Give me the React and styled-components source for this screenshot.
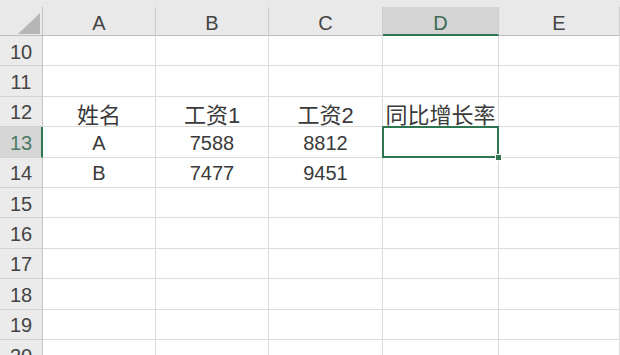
import React from 'react'
import styled, { createGlobalStyle, css } from 'styled-components'

const GlobalStyle = createGlobalStyle`
  html, body {
    margin: 0;
    padding: 0;
    background: #ffffff;
    overflow: hidden;
  }
`

const GREEN = '#2f7550'

const Sheet = styled.div`
  width: 620px;
  height: 355px;
  overflow: hidden;
  background: #e9e9e9;
  padding-top: 7px;
  box-sizing: border-box;
  font-family: 'Liberation Sans', 'Noto Sans CJK SC', sans-serif;
`

const Grid = styled.div`
  display: grid;
  grid-template-columns: 43px 113px 113px 114px 116px 1fr;
  grid-template-rows: 29px;
  grid-auto-rows: 30.4px;
  background: #ffffff;
`

const Corner = styled.div`
  background: #e9e9e9;
  border-right: 1px solid #c4c4c4;
  border-bottom: 1px solid #bdbdbd;
  display: flex;
  align-items: flex-end;
  justify-content: flex-end;
  padding: 0 2px 1px 0;
  box-sizing: border-box;
`

const ColHead = styled.div`
  background: ${p => (p.$active ? '#d4d4d4' : '#e9e9e9')};
  color: ${p => (p.$active ? '#3f6b55' : '#444444')};
  border-right: 1px solid #cdcdcd;
  border-bottom: ${p => (p.$active ? `2px solid ${GREEN}` : '1px solid #bdbdbd')};
  display: flex;
  align-items: center;
  justify-content: center;
  font-size: 20px;
  box-sizing: border-box;
  padding-top: ${p => (p.$active ? '5px' : '4px')};
`

const RowHead = styled.div`
  background: ${p => (p.$active ? '#d6d6d6' : '#ebebeb')};
  color: ${p => (p.$active ? '#4c7a62' : '#444444')};
  border-right: ${p => (p.$active ? `2px solid ${GREEN}` : '1px solid #c4c4c4')};
  border-bottom: 1px solid #d2d2d2;
  display: flex;
  align-items: center;
  justify-content: center;
  font-size: 20px;
  box-sizing: border-box;
  padding-top: 3px;
  padding-left: ${p => (p.$active ? '1px' : '0')};
`

const Cell = styled.div`
  position: relative;
  border-right: 1px solid #dcdcdc;
  border-bottom: 1px solid #dcdcdc;
  display: flex;
  align-items: center;
  justify-content: center;
  font-size: ${p => (p.$cjk ? '22px' : '20px')};
  color: #3a3a3a;
  box-sizing: border-box;
  padding-top: 3px;
  white-space: nowrap;
  ${p => p.$selected && css`
    &::after {
      content: '';
      position: absolute;
      left: -1px;
      top: -1px;
      right: -1px;
      bottom: -1px;
      border: 2px solid ${GREEN};
    }
    &::before {
      content: '';
      position: absolute;
      right: -4px;
      bottom: -4px;
      width: 5px;
      height: 5px;
      background: ${GREEN};
      border: 1px solid #ffffff;
      z-index: 2;
    }
  `}
`

const columns = ['A', 'B', 'C', 'D', 'E']

const data = {
  12: ['姓名', '工资1', '工资2', '同比增长率', ''],
  13: ['A', '7588', '8812', '', ''],
  14: ['B', '7477', '9451', '', '']
}

const rows = [10, 11, 12, 13, 14, 15, 16, 17, 18, 19, 20]

const activeCol = 'D'
const activeRow = 13

const hasCjk = (text) => /[\u4e00-\u9fff]/.test(text)

export default function App() {
  return (
    <>
      <GlobalStyle />
      <Sheet>
        <Grid>
          <Corner>
            <svg width="22" height="21" viewBox="0 0 22 21">
              <polygon points="22,0 22,21 0,21" fill="#b6b6b6" />
            </svg>
          </Corner>
          {columns.map(col => (
            <ColHead key={col} $active={col === activeCol}>{col}</ColHead>
          ))}
          {rows.map(row => (
            <React.Fragment key={row}>
              <RowHead $active={row === activeRow}>{row}</RowHead>
              {columns.map((col, i) => {
                const value = (data[row] && data[row][i]) || ''
                return (
                  <Cell
                    key={col}
                    $cjk={hasCjk(value)}
                    $selected={row === activeRow && col === activeCol}
                  >
                    {value}
                  </Cell>
                )
              })}
            </React.Fragment>
          ))}
        </Grid>
      </Sheet>
    </>
  )
}
